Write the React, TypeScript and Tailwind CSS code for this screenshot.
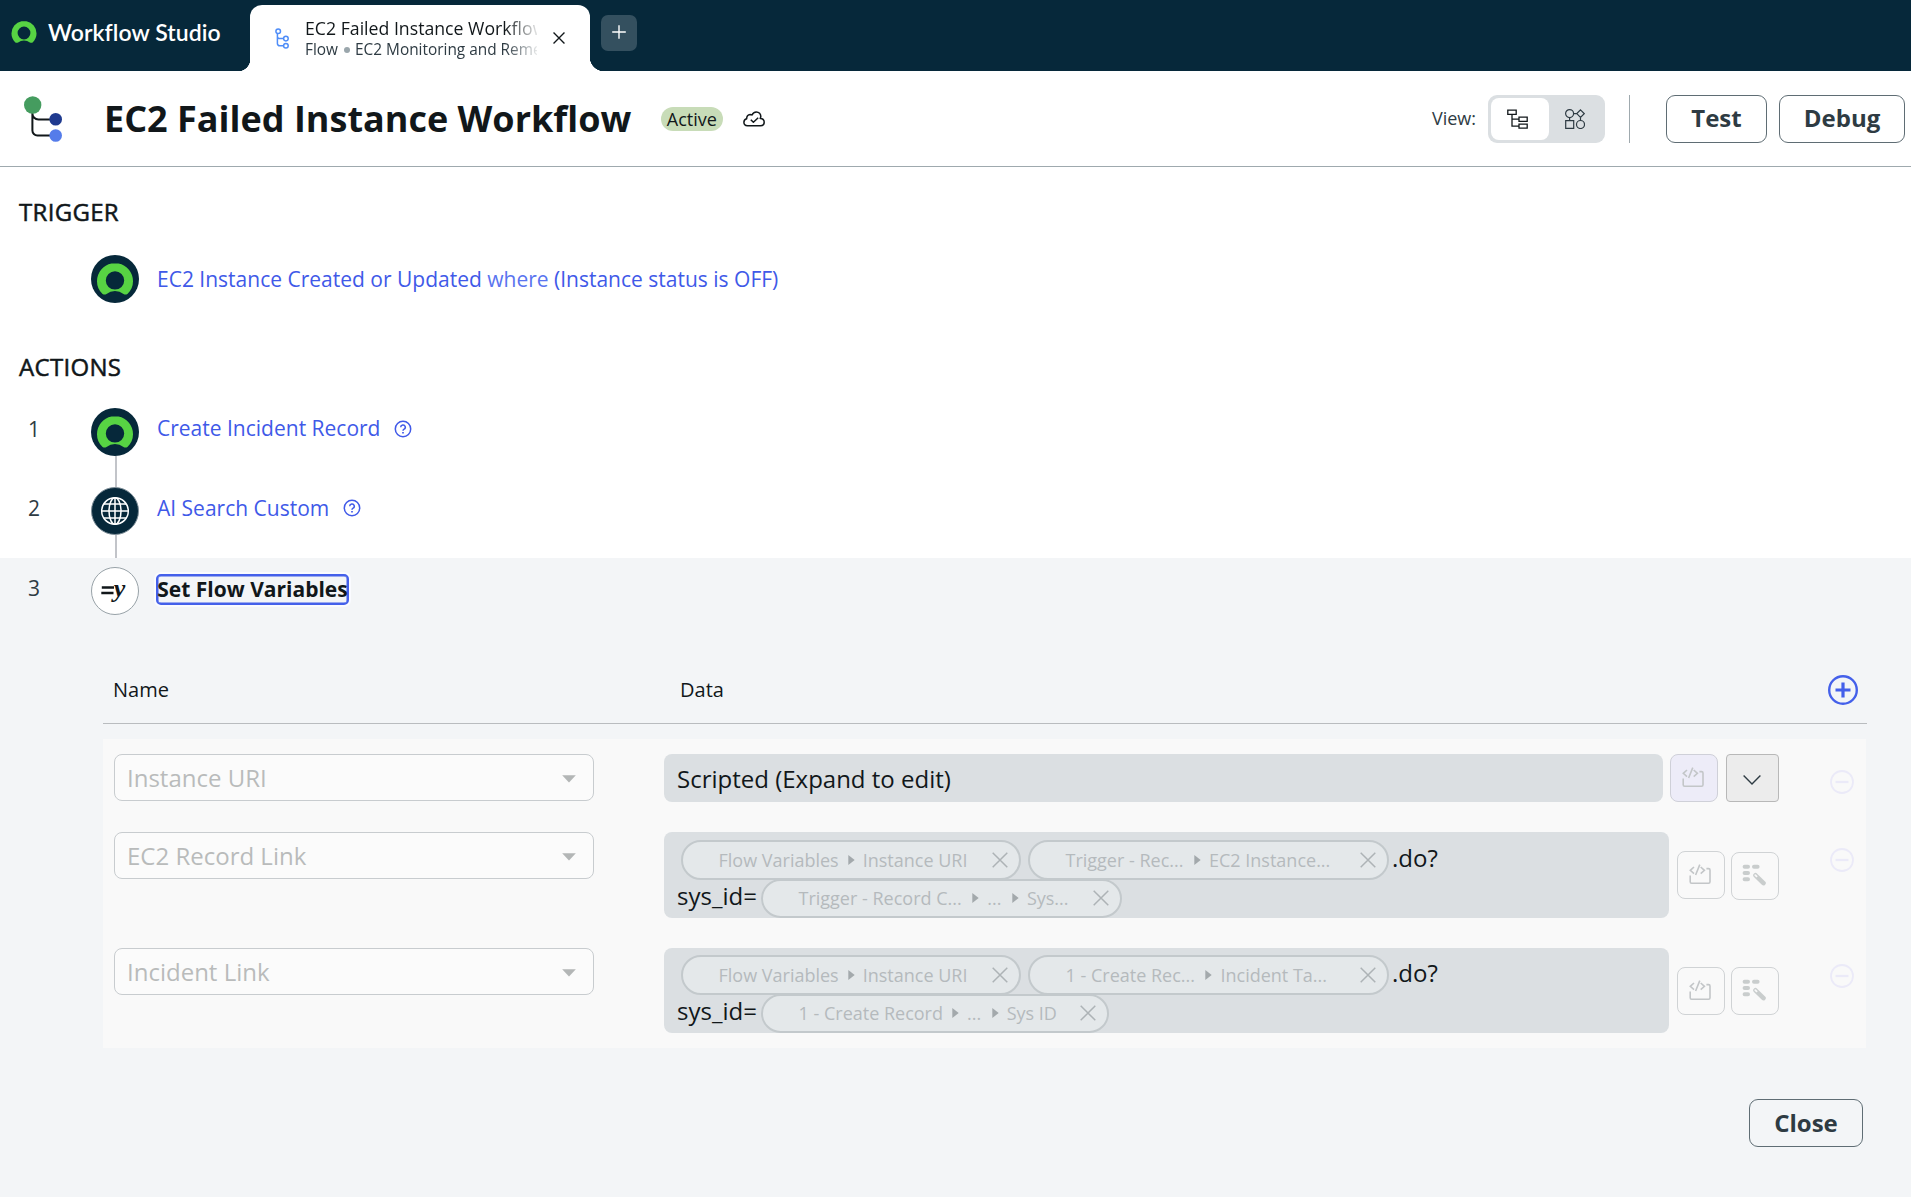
import type { ReactNode } from "react";

function NowMark({ className }: { className?: string }) {
  return (
    <svg viewBox="6 8 36 31.6" className={className} fill="#57d343">
      <path
        fillRule="evenodd"
        d="M11.6 38.8C7.9 35.400 6 31 6 26A18 18 0 0 1 20.500 8.300H27.500A18 18 0 0 1 42 26C42 31 40.100 35.400 36.400 38.800Q34.500 40 32.500 38.800A14 14 0 0 0 15.500 38.800Q13.500 40 11.600 38.800ZM24 16A9.200 9.200 0 1 0 24 34.400A9.200 9.200 0 1 0 24 16Z"
      />
    </svg>
  );
}

function NowBadge() {
  return (
    <span className="flex h-12 w-12 shrink-0 justify-center rounded-full bg-[#06283a] pt-2">
      <NowMark className="h-[32px] w-9" />
    </span>
  );
}

function GlobeBadge() {
  return (
    <span className="flex h-12 w-12 shrink-0 items-center justify-center rounded-full border border-[#7f8f99] bg-[#06283a]">
      <svg viewBox="0 0 30 30" className="h-[30px] w-[30px]" fill="none" stroke="#fff" strokeWidth="1.5">
        <circle cx="15" cy="15" r="13.300" />
        <ellipse cx="15" cy="15" rx="6" ry="13.300" />
        <path d="M15 1.500v27M1.500 15h27M4 8h22M4 22h22" />
      </svg>
    </span>
  );
}

function VariableBadge() {
  return (
    <span className="flex h-12 w-12 shrink-0 items-center justify-center rounded-full border border-[#98a2a8] bg-white pr-[4px]">
      <svg viewBox="0 0 13 9" className="-mt-[1px] h-[9px] w-[13px]" stroke="#11171a" strokeWidth="2.300">
        <path d="M.8 1.500H13M.3 7H12.500" />
      </svg>
      <span className="-mt-[6px] font-['Liberation_Serif',serif] text-[26px] leading-[27px] font-bold text-[#11171a] italic">y</span>
    </span>
  );
}

function HelpIcon() {
  return (
    <svg viewBox="0 0 18 18" className="h-[18px] w-[18px]" fill="none" stroke="#4059e8" strokeWidth="1.5">
      <circle cx="9" cy="9" r="7.700" />
      <path d="M6.700 7.200a2.300 2.200 0 1 1 3.400 1.900c-.8.400-1.100.800-1.100 1.700" />
      <path d="M9 12.100v1.500" strokeWidth="1.700" />
    </svg>
  );
}

function ScriptIcon() {
  return (
    <svg viewBox="0 0 22 20" className="mr-[2px] mb-[2px] h-5 w-[22px]" fill="none" stroke="#c3c6c8" strokeWidth="1.600">
      <path d="M5 3 1.300 6.300 5 9.600M10.800.6 6.600 11M11.700 3l3.700 3.300-3.700 3.300" />
      <path d="M1.200 11.500v6.300a1.400 1.400 0 0 0 1.400 1.400h17a1.400 1.400 0 0 0 1.400-1.400V6a1.400 1.400 0 0 0-1.400-1.400h-2.200" />
    </svg>
  );
}

function WandIcon() {
  return (
    <svg viewBox="0 0 24 22" className="mr-[3px] mb-[3px] h-[22px] w-6" stroke="#c9cdcd" strokeLinecap="round" fill="none">
      <path d="M2.600 2.700H6M12 2.700h3.600M2.600 9H6M2.600 15.300H6" strokeWidth="4" />
      <path d="m13.500 11.300 8 7.800" strokeWidth="4.600" />
      <path d="m13.300 11.100 1.300 1.300" strokeWidth="1.800" stroke="#f9f9f9" />
    </svg>
  );
}

function CloseX({ className }: { className?: string }) {
  return (
    <svg viewBox="0 0 16 16" className={className} fill="none" stroke="currentColor" strokeWidth="1.500">
      <path d="m.700.700 14.600 14.600M15.300.700.700 15.300" />
    </svg>
  );
}

function TopBar() {
  return (
    <header className="flex h-[71px] bg-[#06283a]">
      <div className="flex w-[250px] items-start pl-[11px]">
        <NowMark className="mt-[21px] h-[22px] w-[26px]" />
        <span className="mt-[19px] ml-[11px] font-[Lato,sans-serif] text-[23px] leading-[27px] font-semibold tracking-[0.08px] whitespace-nowrap text-white">
          Workflow Studio
        </span>
      </div>
      <div className="relative mt-[5px] flex w-[340px] rounded-t-[12px] bg-white">
        <span className="absolute bottom-0 -left-3 h-3 w-3 bg-[radial-gradient(circle_at_0_0,transparent_12px,white_12.5px)]" />
        <span className="absolute -right-[14px] bottom-0 h-[14px] w-[14px] bg-[radial-gradient(circle_at_100%_0,transparent_14px,white_14.5px)]" />
        <svg viewBox="0 0 14 21" className="mt-[23px] ml-[25px] h-[21px] w-[14px]" fill="none" stroke="#4f8df8" strokeWidth="1.500">
          <circle cx="3.200" cy="3.200" r="2.300" />
          <circle cx="10.900" cy="10.600" r="2.300" />
          <circle cx="10.900" cy="17.800" r="2.300" />
          <path d="M2.400 5.500v10a2.300 2.300 0 0 0 2.300 2.300h3.900M2.400 8.300a2.300 2.300 0 0 0 2.300 2.300h3.900" />
        </svg>
        <div className="mt-[13px] ml-[16px] w-[232px] overflow-hidden whitespace-nowrap [mask-image:linear-gradient(to_right,black_200px,transparent_236px)]">
          <div className="text-[17.700px] leading-[21px]">EC2 Failed Instance Workflow</div>
          <div className="flex items-center text-[15.400px] leading-[21px] text-[#2e3b43]">
            <span>Flow</span>
            <span className="mr-[5px] ml-[6px] h-[6px] w-[6px] shrink-0 rounded-full bg-[#9aa6ac]" />
            <span>EC2 Monitoring and Remediation</span>
          </div>
        </div>
        <CloseX className="mt-[27px] ml-[16px] h-[12px] w-[12px] stroke-[1.8]" />
      </div>
      <button className="mt-[15px] ml-[11px] flex h-9 w-9 items-center justify-center rounded-[7px] bg-[#34505f]">
        <svg viewBox="0 0 14 14" className="mb-[3px] h-[14px] w-[14px]" stroke="#fff" strokeWidth="1.400">
          <path d="M7 .2v13.600M.2 7h13.600" />
        </svg>
      </button>
    </header>
  );
}

function OutlineButton({ children, className }: { children: ReactNode; className: string }) {
  return (
    <button className={"h-12 rounded-[9px] border border-[#5f6d74] text-[24px] leading-[30px] font-bold text-[#2e3b43] " + className}>
      {children}
    </button>
  );
}

function TitleBar() {
  return (
    <div className="flex h-24 items-center border-b border-[#9fa9ae] pt-px pr-[6px]">
      <svg viewBox="0 0 42 48" className="ml-[23px] h-12 w-[42px]" fill="none">
        <path d="M9.400 16v19.500a5 5 0 0 0 5 5H29M9.400 17v1.500a6 6 0 0 0 6 6H29" stroke="#11171a" strokeWidth="2" />
        <circle cx="9.700" cy="10" r="8.700" fill="#459c5f" />
        <circle cx="32.700" cy="24.300" r="6.300" fill="#1f3a8f" />
        <circle cx="32.700" cy="40.500" r="6.300" fill="#557cea" />
      </svg>
      <h1 className="ml-[39px] pb-px text-[36px] leading-[44px] font-bold whitespace-nowrap">EC2 Failed Instance Workflow</h1>
      <span className="ml-[29.500px] flex h-6 w-[62px] items-center justify-center rounded-full bg-[#c8dcb8] text-[18px] leading-6">Active</span>
      <svg viewBox="0 0 22 16" className="ml-[20.500px] h-4 w-[22px]" fill="none" stroke="#11171a" strokeWidth="1.500" strokeLinejoin="round">
        <path d="M4.500 14.800C2.200 14.600.9 13 .9 11.200c0-1.700 1.200-3 2.800-3.400-.2-2.400 1.300-4.300 3.400-4.400.8 0 1.400.2 1.900.6C9.800 2 11.400.9 13.300.9c2.700 0 4.600 2 4.500 4.700-.1.800-.3 1.300-.6 1.800 2.300-.2 4 1.500 4 3.700 0 2.100-1.600 3.700-3.700 3.700Z" />
        <path d="m7.800 8.700 2.600 2.600 4.800-4.500" />
      </svg>
      <div className="ml-auto flex items-center">
        <span className="pb-[2px] text-[18px] leading-6 text-[#2e3b43]">View:</span>
        <div className="ml-[12px] flex h-12 w-[117px] rounded-[9px] bg-[#dbdfe2] p-[3px]">
          <span className="flex w-[58px] items-center justify-center rounded-[8px] bg-white pr-[6px]">
            <svg viewBox="0 0 21 20" className="h-5 w-[21px]" fill="none" stroke="#11171a" strokeWidth="1.300">
              <path d="M.8 1.200h8.400v4.200H.8zM12 8.100h8.200v4.200H12zM12 15.100h8.200v4.100H12zM5 5.400v11.800h7M5 10.200h7" />
            </svg>
          </span>
          <span className="flex flex-1 items-center justify-center pr-px pb-px">
            <svg viewBox="0 0 20 20" className="h-5 w-5" fill="none" stroke="#2e3b43" strokeWidth="1.200">
              <circle cx="4.600" cy="4.600" r="4" />
              <path d="m15.500.9 3.700 3.700-3.700 3.700-3.700-3.700zM.7 11.700h8v7.600h-8zM4.600 8.600v3.100M8.600 4.600h3.200M15.500 8.300v3.200" />
              <circle cx="15.500" cy="15.500" r="4" />
            </svg>
          </span>
        </div>
        <span className="ml-6 h-12 w-px bg-[#9fa9ae]" />
        <OutlineButton className="ml-[36px] w-[101px] pb-[3px]">Test</OutlineButton>
        <OutlineButton className="ml-3 w-[126px] pb-[3px]">Debug</OutlineButton>
      </div>
    </div>
  );
}

function SectionTitle({ children, className }: { children: ReactNode; className: string }) {
  return (
    <h2 className={"pl-[19px] text-[24px] leading-6 tracking-[0.3px] [-webkit-text-stroke:0.5px_#11171a] " + className}>{children}</h2>
  );
}

function Connector({ className }: { className: string }) {
  return <div className={"ml-[115px] w-[2px] bg-[#c2c4c9] " + className} />;
}

function ArrowRight() {
  return (
    <svg viewBox="0 0 7 10" className="mr-[8px] ml-[9px] h-[10px] w-[7px] shrink-0" fill="#a3a9ac">
      <path d="M.3 0 6.700 5 .3 10z" />
    </svg>
  );
}

function Chip({ parts, className }: { parts: string[]; className: string }) {
  return (
    <span
      className={
        "flex shrink-0 items-center rounded-full border-2 border-[#c3c9cc] bg-[#e4e8ea] pr-[11px] pl-[35.500px] text-[18px] leading-6 whitespace-nowrap text-[#b5babd] " +
        className
      }
    >
      {parts.map((part, i) => (
        <span key={i} className="flex items-center">
          {i > 0 && <ArrowRight />}
          <span className={part.endsWith("...") ? "mr-[1.500px]" : ""}>{part}</span>
        </span>
      ))}
      <CloseX className="ml-auto h-4 w-4 text-[#adb3b6]" />
    </span>
  );
}

function Select({ label }: { label: string }) {
  return (
    <div className="flex h-[47px] w-[480px] shrink-0 items-center justify-between rounded-[8px] border border-[#c8cccf] bg-[#fbfbfb] pr-[17px] pl-[12px] text-[24px] leading-[30px] text-[#b9bbbb]">
      <span>{label}</span>
      <svg viewBox="0 0 14 8" className="mt-[3px] h-2 w-[14px]" fill="#b3b6b6">
        <path d="M.2.300h13.600L7 7.600z" />
      </svg>
    </div>
  );
}

function RemoveIcon({ className }: { className: string }) {
  return (
    <svg viewBox="0 0 24 24" className={"mt-4 h-6 w-6 " + className} fill="none" stroke="#ebeaf8" strokeWidth="1.800">
      <circle cx="12" cy="12" r="11" />
      <path d="M5.500 12h13" strokeWidth="2.200" />
    </svg>
  );
}

const toolButton = "flex h-12 w-12 shrink-0 items-center justify-center rounded-[8px] border border-[#d0d3d5]";

function TemplateRow({
  label,
  source,
  target,
  targetClass,
  tail,
  tailClass,
  className,
  boxClass,
  wandClass,
}: {
  label: string;
  source: string[];
  target: string[];
  targetClass: string;
  tail: string[];
  tailClass: string;
  className: string;
  boxClass: string;
  wandClass: string;
}) {
  return (
    <div className={"flex items-start pl-[11px] " + className}>
      <Select label={label} />
      <div className={"ml-[70px] w-[1005px] shrink-0 rounded-[8px] bg-[#dbdfe2] pl-[13px] text-[24px] leading-[30px] " + boxClass}>
        <div className="flex items-center pl-[4px]">
          <Chip parts={source} className="h-10 w-[340px]" />
          <Chip parts={target} className={"ml-[7px] h-10 " + targetClass} />
          <span className="ml-[3px] pb-[5px]">.do?</span>
        </div>
        <div className="-mt-px flex items-center">
          <span className="w-[84px] pb-[6px]">sys_id=</span>
          <Chip parts={tail} className={"h-[39px] pb-px " + tailClass} />
        </div>
      </div>
      <span className={toolButton + " mt-[19px] ml-2"}>
        <ScriptIcon />
      </span>
      <span className={toolButton + " ml-[6px] " + wandClass}>
        <WandIcon />
      </span>
      <RemoveIcon className="ml-[50.500px]" />
    </div>
  );
}

export default function App() {
  return (
    <div className="flex h-[1197px] w-[1911px] flex-col overflow-hidden bg-white font-['Open_Sans',sans-serif] text-[#11171a]">
      <TopBar />
      <TitleBar />

      <SectionTitle className="mt-[33px]">TRIGGER</SectionTitle>
      <div className="mt-[31px] flex items-center pl-[91px]">
        <NowBadge />
        <span className="ml-[18px] text-[21px] leading-7 text-[#4059e8]">
          EC2 Instance Created or Updated <span className="text-[#5a74ef]">where</span> (Instance status is OFF)
        </span>
      </div>

      <SectionTitle className="mt-[52px]">ACTIONS</SectionTitle>
      <div className="mt-[29px] flex items-center">
        <span className="w-[91px] pb-[6px] pl-[28px] text-[21px] leading-7 text-[#2e3b43]">1</span>
        <NowBadge />
        <span className="mb-[9px] ml-[18px] text-[21px] leading-7 text-[#4059e8]">Create Incident Record</span>
        <span className="mb-[6px] ml-[14px]">
          <HelpIcon />
        </span>
      </div>
      <Connector className="h-[31px]" />
      <div className="flex items-center">
        <span className="w-[91px] pb-[6px] pl-[28px] text-[21px] leading-7 text-[#2e3b43]">2</span>
        <GlobeBadge />
        <span className="mb-[6px] ml-[18px] text-[21px] leading-7 text-[#4059e8]">AI Search Custom</span>
        <span className="mb-[6px] ml-[14px]">
          <HelpIcon />
        </span>
      </div>
      <Connector className="h-[23px]" />

      <section className="flex-1 bg-[#f3f5f7]">
        <div className="flex items-center pt-[9px]">
          <span className="w-[91px] pb-[6px] pl-[28px] text-[21px] leading-7 text-[#2e3b43]">3</span>
          <VariableBadge />
          <span className="mb-[4px] ml-[17px] flex h-[31px] w-[193px] items-center justify-center rounded-[5px] border-2 border-[#4460ea] pb-px text-[21px] leading-[26px] font-bold whitespace-nowrap shadow-[0_0_0_2px_#fafbff,inset_0_0_0_0.5px_#4460ea]">
            Set Flow Variables
          </span>
        </div>

        <div className="mt-[43px] mr-[44px] ml-[103px] flex h-[66px] items-center border-b border-[#b9bcbf] pr-[9px] pl-[10px] text-[20px] leading-7">
          <span className="w-[567px] pb-[2px]">Name</span>
          <span className="pb-[2px]">Data</span>
          <svg viewBox="0 0 30 30" className="mb-px ml-auto h-[30px] w-[30px]" fill="none" stroke="#4460ea">
            <circle cx="15" cy="15" r="13.800" strokeWidth="2.400" />
            <path d="M15 7.500v15M7.500 15h15" strokeWidth="3.200" />
          </svg>
        </div>

        <div className="mt-[15px] mr-[45px] ml-[103px] h-[309px] bg-[#f9f9f9] pt-[15px]">
          <div className="flex h-[78px] items-start pl-[11px]">
            <Select label="Instance URI" />
            <div className="ml-[70px] flex h-12 w-[999px] shrink-0 items-center rounded-[8px] bg-[#dbdfe2] pt-px pl-[13px] text-[24px] leading-[30px]">
              Scripted (Expand to edit)
            </div>
            <span className="ml-[7px] flex h-12 w-12 shrink-0 items-center justify-center rounded-[8px] border border-[#cfd0d8] bg-[#edecf8] pb-px">
              <ScriptIcon />
            </span>
            <span className="ml-2 flex h-12 w-[53px] shrink-0 items-center justify-center rounded-[4px] border border-[#b8b8b8] bg-[#ececec]">
              <svg viewBox="0 0 18 10" className="mt-[3px] mr-px h-[10px] w-[18px]" fill="none" stroke="#2e3b43" strokeWidth="1.400">
                <path d="m.600.600 8.400 8.300 8.400-8.300" />
              </svg>
            </span>
            <RemoveIcon className="ml-[50.500px]" />
          </div>
          <TemplateRow
            label="EC2 Record Link"
            source={["Flow Variables", "Instance URI"]}
            target={["Trigger - Rec...", "EC2 Instance..."]}
            targetClass="w-[361px]"
            tail={["Trigger - Record C...", "...", "Sys..."]}
            tailClass="w-[361px]"
            className="h-[116px]"
            boxClass="h-[86px] pt-2"
            wandClass="mt-5"
          />
          <TemplateRow
            label="Incident Link"
            source={["Flow Variables", "Instance URI"]}
            target={["1 - Create Rec...", "Incident Ta..."]}
            targetClass="w-[361px]"
            tail={["1 - Create Record", "...", "Sys ID"]}
            tailClass="w-[348px]"
            className="h-[100px]"
            boxClass="h-[85px] pt-[7px]"
            wandClass="mt-[19px]"
          />
        </div>

        <div className="mt-[51px] flex justify-end pr-[48px]">
          <OutlineButton className="w-[114px]">Close</OutlineButton>
        </div>
      </section>
    </div>
  );
}
